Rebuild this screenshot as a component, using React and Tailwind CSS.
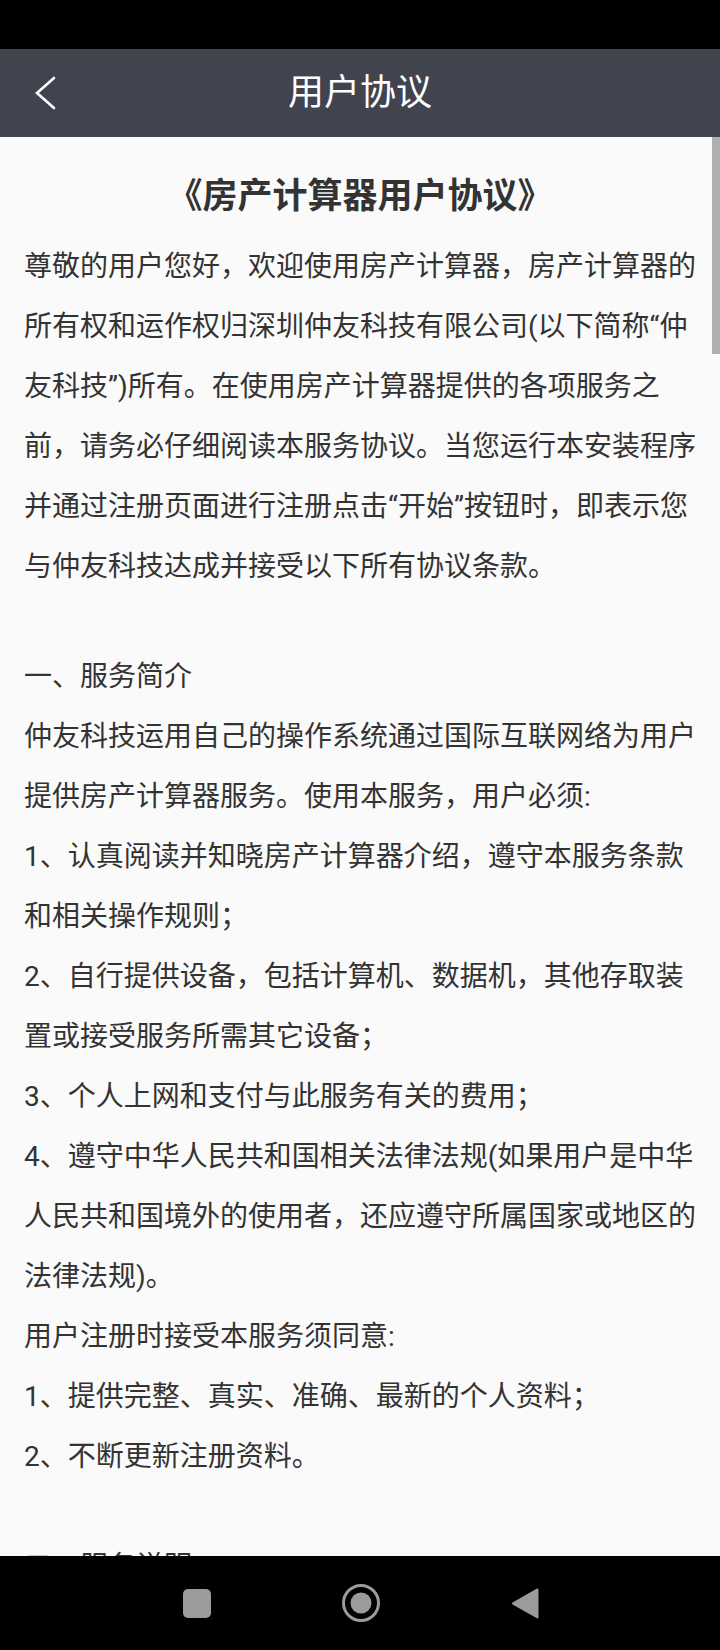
import React from "react";

const font = { fontFamily: 'Roboto, "Noto Sans CJK SC", sans-serif' };

const intro = [
    "尊敬的用户您好，欢迎使用房产计算器，房产计算器的",
    "所有权和运作权归深圳仲友科技有限公司(以下简称“仲",
    "友科技”)所有。在使用房产计算器提供的各项服务之",
    "前，请务必仔细阅读本服务协议。当您运行本安装程序",
    "并通过注册页面进行注册点击“开始”按钮时，即表示您",
    "与仲友科技达成并接受以下所有协议条款。",
];

const section1 = [
    "一、服务简介",
    "仲友科技运用自己的操作系统通过国际互联网络为用户",
    "提供房产计算器服务。使用本服务，用户必须:",
    "1、认真阅读并知晓房产计算器介绍，遵守本服务条款",
    "和相关操作规则；",
    "2、自行提供设备，包括计算机、数据机，其他存取装",
    "置或接受服务所需其它设备；",
    "3、个人上网和支付与此服务有关的费用；",
    "4、遵守中华人民共和国相关法律法规(如果用户是中华",
    "人民共和国境外的使用者，还应遵守所属国家或地区的",
    "法律法规)。",
    "用户注册时接受本服务须同意:",
    "1、提供完整、真实、准确、最新的个人资料；",
    "2、不断更新注册资料。",
];

// only the heading peeks out above the nav bar
const section2 = ["二、服务说明"];

const Lines = ({ lines }) => (
    <div>
        {lines.map((line, idx) => (
            <p key={idx} className="whitespace-nowrap text-[28px] leading-[60px] text-[#333333]">
                {line}
            </p>
        ))}
    </div>
);

const Header = () => (
    <header className="grid h-[88px] shrink-0 grid-cols-[88px_1fr_88px] items-center bg-[#41444f]">
        <div className="flex items-center pl-[35px]">
            <svg width="22" height="34" viewBox="0 0 22 34" fill="none">
                <polyline points="19,2 2,17 19,32" stroke="#ffffff" strokeWidth="2.6" strokeLinecap="round" strokeLinejoin="miter" />
            </svg>
        </div>
        <h1 className="text-center text-[36px] font-normal text-white">用户协议</h1>
        <div />
    </header>
);

const NavBar = () => (
    <nav className="flex h-[94px] shrink-0 items-center justify-center gap-[131px] bg-black pl-[2px]">
        <div className="h-[29px] w-[28px] rounded-[5px] bg-[#9b9b9b]" />
        <svg width="38" height="38" viewBox="0 0 38 38">
            <circle cx="19" cy="19" r="17.5" fill="none" stroke="#9b9b9b" strokeWidth="3" />
            <circle cx="19" cy="19" r="10.5" fill="#9b9b9b" />
        </svg>
        <svg width="28" height="33" viewBox="0 0 28 33">
            <path d="M26 1.5 Q27.5 1 27.5 3 L27.5 30 Q27.5 32 26 31.3 L1.5 17.6 Q0.5 16.5 1.5 15.4 Z" fill="#9b9b9b" />
        </svg>
    </nav>
);

const App = () => {
    return (
        <div className="flex h-[1650px] w-[720px] flex-col overflow-hidden bg-[#fafafa]" style={font}>
            <div className="h-[49px] shrink-0 bg-black" />
            <Header />
            <main className="relative flex-1 overflow-hidden px-[24px] pt-[30px]">
                <div className="absolute right-0 top-0 h-[217px] w-[8px] bg-[#b0b0b0]" />
                <h2 className="text-center text-[35px] font-bold leading-[60px] text-[#333333]">《房产计算器用户协议》</h2>
                <div className="mt-[10px]">
                    <Lines lines={intro} />
                    <div className="h-[50px]" />
                    <Lines lines={section1} />
                    <div className="h-[50px]" />
                    <Lines lines={section2} />
                </div>
            </main>
            <NavBar />
        </div>
    );
};

export default App;
